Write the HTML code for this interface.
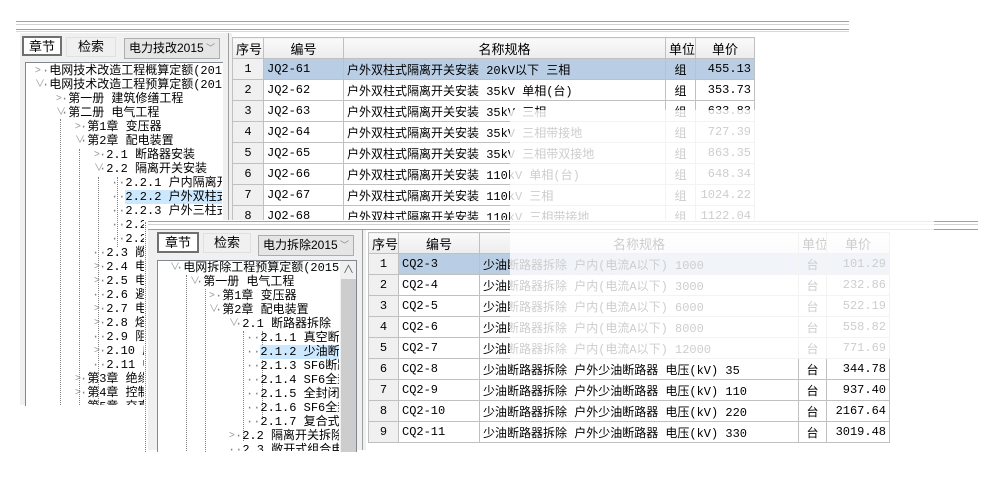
<!DOCTYPE html>
<html><head><meta charset="utf-8"><style>
*{margin:0;padding:0;box-sizing:border-box}
body{width:1000px;height:500px;background:#fff;position:relative;overflow:hidden;font-family:"Liberation Sans","Noto Sans CJK SC",sans-serif;font-size:12px;color:#000}
.a{position:absolute}
.hl{position:absolute;height:1px;background:#a0a0a0}
.tree{position:absolute;overflow:hidden;background:#fff;border:1px solid #828790}
.ti{position:absolute;height:14px;line-height:14px;white-space:nowrap;font-size:12px;font-family:"Liberation Mono","Noto Sans CJK SC",monospace}
.ti b{font-weight:normal;color:#808080}
.ar{position:absolute;color:#999;font-size:10px;line-height:14px}
.vd{position:absolute;width:0;border-left:1px dotted #808080}
table{border-collapse:collapse;position:absolute;table-layout:fixed}
td,th{border:1px solid #c0c0c0;height:21px;font-weight:normal;white-space:nowrap;overflow:hidden;font-size:12px;padding:0 3px}
td{font-family:"Liberation Mono","Noto Sans CJK SC",monospace}
th{background:linear-gradient(#fafafa,#ececec);text-align:center;font-size:13px}
td.n{background:#f0f0f0;text-align:center}
td.c{text-align:center}
td.r{text-align:right}
tr.sel td:not(.n){background:#b9cde5}
.tab{position:absolute;border:1px solid #a0a0a0;background:#f0f0f0;text-align:center;font-size:13px;line-height:18px}
.dd{position:absolute;border:1px solid #adadad;background:#e5e5e5;font-size:12px;line-height:19px;padding-left:4px;white-space:nowrap;overflow:hidden}
.dd span{position:absolute;right:4px;top:0;color:#888;font-size:9px}
</style></head><body>

<!-- top window -->
<div class="hl" style="left:16px;top:21px;width:833px"></div>
<div class="hl" style="left:16px;top:24px;width:833px;background:#d0d0d0"></div>
<div class="hl" style="left:16px;top:29px;width:833px"></div>
<div class="hl" style="left:16px;top:31px;width:833px;background:#d8d8d8"></div>
<div class="a" style="left:20px;top:33px;width:212px;height:372px;background:#f0f0f0"></div>
<div class="a" style="left:228px;top:33px;width:1px;height:190px;background:#a0a0a0"></div>
<div class="tab" style="left:22px;top:36px;width:40px;height:20px;border:2px solid #707070;background:#fff">章节</div>
<div class="tab" style="left:66px;top:37px;width:50px;height:20px;border-color:#e0e0e0">检索</div>
<div class="dd" style="left:124px;top:38px;width:96px;height:21px">电力技改2015<span>﹀</span></div>
<div class="tree" style="left:25px;top:62px;width:198px;height:344px;border-right:none;border-bottom:none">
 <div class="vd" style="left:34px;top:56px;height:290px"></div>
 <div class="vd" style="left:53px;top:86px;height:260px"></div>
 <div class="vd" style="left:72px;top:114px;height:240px"></div>
 <div class="vd" style="left:91px;top:114px;height:70px"></div>
</div>
<div class="a" style="left:26px;top:63px;width:196px;height:342px;overflow:hidden">
 <div class="ar" style="left:9px;top:1px">&gt;</div><div class="ti" style="left:16px;top:1px"><b>·</b>电网技术改造工程概算定额(2015)</div>
 <div class="ar" style="left:9px;top:15px">∨</div><div class="ti" style="left:16px;top:15px"><b>·</b>电网技术改造工程预算定额(2015)</div>
 <div class="ar" style="left:30px;top:29px">&gt;</div><div class="ti" style="left:35px;top:29px"><b>·</b>第一册 建筑修缮工程</div>
 <div class="ar" style="left:30px;top:43px">∨</div><div class="ti" style="left:35px;top:43px"><b>·</b>第二册 电气工程</div>
 <div class="ar" style="left:49px;top:57px">&gt;</div><div class="ti" style="left:54px;top:57px"><b>·</b>第1章 变压器</div>
 <div class="ar" style="left:49px;top:71px">∨</div><div class="ti" style="left:54px;top:71px"><b>·</b>第2章 配电装置</div>
 <div class="ar" style="left:68px;top:85px">&gt;</div><div class="ti" style="left:73px;top:85px"><b>·</b>2.1 断路器安装</div>
 <div class="ar" style="left:68px;top:99px">∨</div><div class="ti" style="left:73px;top:99px"><b>·</b>2.2 隔离开关安装</div>
 <div class="ti" style="left:85px;top:113px"><b>··</b>2.2.1 户内隔离开关</div>
 <div class="ti" style="left:85px;top:127px"><b>··</b><span style="background:#cce8ff">2.2.2 户外双柱式</span></div>
 <div class="ti" style="left:85px;top:141px"><b>··</b>2.2.3 户外三柱式</div>
 <div class="ti" style="left:85px;top:155px"><b>··</b>2.2.4</div>
 <div class="ti" style="left:85px;top:169px"><b>··</b>2.2.5</div>
 <div class="ti" style="left:66px;top:183px"><b>··</b>2.3 敞开</div>
 <div class="ar" style="left:68px;top:197px">&gt;</div><div class="ti" style="left:73px;top:197px"><b>·</b>2.4 电缆</div>
 <div class="ar" style="left:68px;top:211px">&gt;</div><div class="ti" style="left:73px;top:211px"><b>·</b>2.5 电抗</div>
 <div class="ti" style="left:66px;top:225px"><b>··</b>2.6 避雷</div>
 <div class="ar" style="left:68px;top:239px">&gt;</div><div class="ti" style="left:73px;top:239px"><b>·</b>2.7 电容</div>
 <div class="ar" style="left:68px;top:253px">&gt;</div><div class="ti" style="left:73px;top:253px"><b>·</b>2.8 熔断</div>
 <div class="ti" style="left:66px;top:267px"><b>··</b>2.9 阻波</div>
 <div class="ar" style="left:68px;top:281px">&gt;</div><div class="ti" style="left:73px;top:281px"><b>·</b>2.10 成套</div>
 <div class="ti" style="left:66px;top:295px"><b>··</b>2.11 中</div>
 <div class="ar" style="left:49px;top:309px">&gt;</div><div class="ti" style="left:54px;top:309px"><b>·</b>第3章 绝缘子</div>
 <div class="ar" style="left:49px;top:323px">&gt;</div><div class="ti" style="left:54px;top:323px"><b>·</b>第4章 控制</div>
 <div class="ti" style="left:54px;top:337px"><b>·</b>第5章 交直</div>
</div>

<table style="left:232px;top:37px;width:522px">
<colgroup><col style="width:31px"><col style="width:80px"><col style="width:322px"><col style="width:30px"><col style="width:59px"></colgroup>
<tr><th>序号</th><th>编号</th><th>名称规格</th><th>单位</th><th>单价</th></tr>
<tr class="sel"><td class="n">1</td><td>JQ2-61</td><td>户外双柱式隔离开关安装 20kV以下 三相</td><td class="c">组</td><td class="r">455.13</td></tr>
<tr><td class="n">2</td><td>JQ2-62</td><td>户外双柱式隔离开关安装 35kV 单相(台)</td><td class="c">组</td><td class="r">353.73</td></tr>
<tr><td class="n">3</td><td>JQ2-63</td><td>户外双柱式隔离开关安装 35kV 三相</td><td class="c">组</td><td class="r">633.83</td></tr>
<tr><td class="n">4</td><td>JQ2-64</td><td>户外双柱式隔离开关安装 35kV 三相带接地</td><td class="c">组</td><td class="r">727.39</td></tr>
<tr><td class="n">5</td><td>JQ2-65</td><td>户外双柱式隔离开关安装 35kV 三相带双接地</td><td class="c">组</td><td class="r">863.35</td></tr>
<tr><td class="n">6</td><td>JQ2-66</td><td>户外双柱式隔离开关安装 110kV 单相(台)</td><td class="c">组</td><td class="r">648.34</td></tr>
<tr><td class="n">7</td><td>JQ2-67</td><td>户外双柱式隔离开关安装 110kV 三相</td><td class="c">组</td><td class="r">1024.22</td></tr>
<tr><td class="n">8</td><td>JQ2-68</td><td>户外双柱式隔离开关安装 110kV 三相带接地</td><td class="c">组</td><td class="r">1122.04</td></tr>
</table>

<!-- lower window -->
<div class="a" style="left:144px;top:220px;width:834px;height:240px;background:#fff"></div>
<div class="vd" style="left:145px;top:222px;height:230px"></div>
<div class="hl" style="left:148px;top:221px;width:830px"></div>
<div class="hl" style="left:148px;top:224px;width:830px;background:#d0d0d0"></div>
<div class="hl" style="left:148px;top:229px;width:830px;background:#8ca0b8"></div>
<div class="a" style="left:148px;top:230px;width:218px;height:220px;background:#f0f0f0"></div>
<div class="a" style="left:362px;top:230px;width:1px;height:220px;background:#a0a0a0"></div>
<div class="tab" style="left:157px;top:232px;width:42px;height:21px;border:2px solid #707070;background:#fff">章节</div>
<div class="tab" style="left:203px;top:233px;width:48px;height:20px;border-color:#e0e0e0">检索</div>
<div class="dd" style="left:258px;top:235px;width:96px;height:21px">电力拆除2015<span>﹀</span></div>
<div class="tree" style="left:157px;top:260px;width:200px;height:192px;border-bottom:none">
 <div class="vd" style="left:28px;top:14px;height:180px"></div>
 <div class="vd" style="left:47px;top:28px;height:165px"></div>
 <div class="vd" style="left:85px;top:70px;height:110px"></div>
 <div class="vd" style="left:104px;top:70px;height:88px"></div>
 <div class="a" style="left:182px;top:0;width:17px;height:192px;background:#f0f0f0"></div>
 <div class="a" style="left:183px;top:18px;width:15px;height:174px;background:#cdcdcd"></div>
 <div class="a" style="left:185px;top:0;font-size:11px;color:#555">∧</div>
</div>
<div class="a" style="left:158px;top:261px;width:181px;height:190px;overflow:hidden">
 <div class="ar" style="left:12px;top:0">∨</div><div class="ti" style="left:18px;top:0"><b>·</b>电网拆除工程预算定额(2015)</div>
 <div class="ar" style="left:32px;top:14px">∨</div><div class="ti" style="left:38px;top:14px"><b>·</b>第一册 电气工程</div>
 <div class="ar" style="left:51px;top:28px">&gt;</div><div class="ti" style="left:57px;top:28px"><b>·</b>第1章 变压器</div>
 <div class="ar" style="left:51px;top:42px">∨</div><div class="ti" style="left:57px;top:42px"><b>·</b>第2章 配电装置</div>
 <div class="ar" style="left:71px;top:56px">∨</div><div class="ti" style="left:77px;top:56px"><b>·</b>2.1 断路器拆除</div>
 <div class="ti" style="left:88px;top:70px"><b>··</b>2.1.1 真空断路器</div>
 <div class="ti" style="left:88px;top:84px"><b>··</b><span style="background:#cce8ff">2.1.2 少油断路器</span></div>
 <div class="ti" style="left:88px;top:98px"><b>··</b>2.1.3 SF6断路器</div>
 <div class="ti" style="left:88px;top:112px"><b>··</b>2.1.4 SF6全封闭</div>
 <div class="ti" style="left:88px;top:126px"><b>··</b>2.1.5 全封闭组合</div>
 <div class="ti" style="left:88px;top:140px"><b>··</b>2.1.6 SF6全封闭</div>
 <div class="ti" style="left:88px;top:154px"><b>··</b>2.1.7 复合式组合</div>
 <div class="ar" style="left:71px;top:168px">&gt;</div><div class="ti" style="left:77px;top:168px"><b>·</b>2.2 隔离开关拆除</div>
 <div class="ti" style="left:70px;top:182px"><b>··</b>2.3 敞开式组合电器</div>
</div>

<table style="left:368px;top:232px;width:521px">
<colgroup><col style="width:30px"><col style="width:81px"><col style="width:319px"><col style="width:28px"><col style="width:63px"></colgroup>
<tr><th>序号</th><th>编号</th><th>名称规格</th><th>单位</th><th>单价</th></tr>
<tr class="sel"><td class="n">1</td><td>CQ2-3</td><td>少油断路器拆除 户内(电流A以下) 1000</td><td class="c">台</td><td class="r">101.29</td></tr>
<tr><td class="n">2</td><td>CQ2-4</td><td>少油断路器拆除 户内(电流A以下) 3000</td><td class="c">台</td><td class="r">232.86</td></tr>
<tr><td class="n">3</td><td>CQ2-5</td><td>少油断路器拆除 户内(电流A以下) 6000</td><td class="c">台</td><td class="r">522.19</td></tr>
<tr><td class="n">4</td><td>CQ2-6</td><td>少油断路器拆除 户内(电流A以下) 8000</td><td class="c">台</td><td class="r">558.82</td></tr>
<tr><td class="n">5</td><td>CQ2-7</td><td>少油断路器拆除 户内(电流A以下) 12000</td><td class="c">台</td><td class="r">771.69</td></tr>
<tr><td class="n">6</td><td>CQ2-8</td><td>少油断路器拆除 户外少油断路器 电压(kV) 35</td><td class="c">台</td><td class="r">344.78</td></tr>
<tr><td class="n">7</td><td>CQ2-9</td><td>少油断路器拆除 户外少油断路器 电压(kV) 110</td><td class="c">台</td><td class="r">937.40</td></tr>
<tr><td class="n">8</td><td>CQ2-10</td><td>少油断路器拆除 户外少油断路器 电压(kV) 220</td><td class="c">台</td><td class="r">2167.64</td></tr>
<tr><td class="n">9</td><td>CQ2-11</td><td>少油断路器拆除 户外少油断路器 电压(kV) 330</td><td class="c">台</td><td class="r">3019.48</td></tr>
</table>

<!-- fade overlay -->
<div class="a" style="left:510px;top:110px;width:424px;height:249px;background:rgba(255,255,255,0.8)"></div>
</body></html>
